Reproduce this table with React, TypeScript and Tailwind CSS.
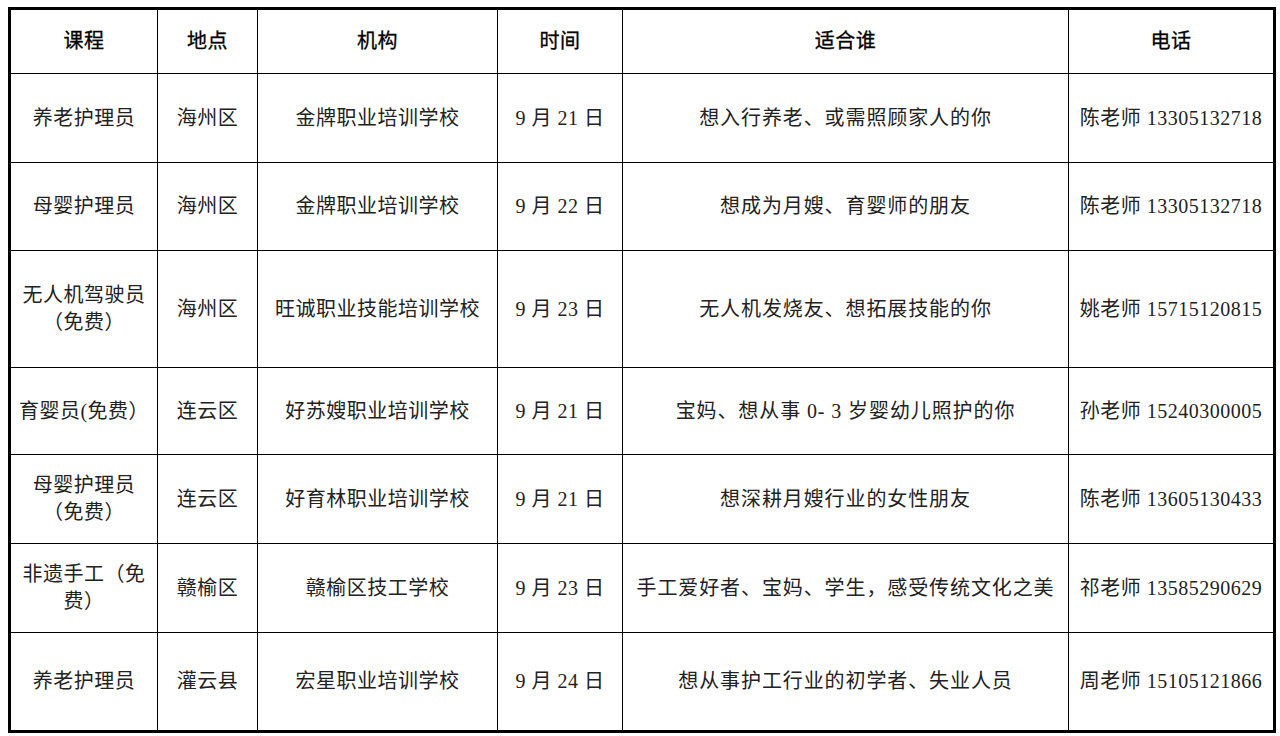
import React from "react";

/** Column widths in px (each includes its 1px right border) */
const COLS = "grid-cols-[147px_100px_240px_125px_446px_1fr]";

const HEADERS = ["课程", "地点", "机构", "时间", "适合谁", "电话"];

interface Row {
  course: React.ReactNode;
  area: string;
  school: string;
  date: string;
  who: string;
  phone: string;
  h: string;
}

const ROWS: Row[] = [
  {
    course: "养老护理员",
    area: "海州区",
    school: "金牌职业培训学校",
    date: "9 月 21 日",
    who: "想入行养老、或需照顾家人的你",
    phone: "陈老师 13305132718",
    h: "h-[89px]",
  },
  {
    course: "母婴护理员",
    area: "海州区",
    school: "金牌职业培训学校",
    date: "9 月 22 日",
    who: "想成为月嫂、育婴师的朋友",
    phone: "陈老师 13305132718",
    h: "h-[88px]",
  },
  {
    course: (
      <>
        无人机驾驶员
        <br />
        （免费）
      </>
    ),
    area: "海州区",
    school: "旺诚职业技能培训学校",
    date: "9 月 23 日",
    who: "无人机发烧友、想拓展技能的你",
    phone: "姚老师 15715120815",
    h: "h-[117px]",
  },
  {
    course: "育婴员(免费）",
    area: "连云区",
    school: "好苏嫂职业培训学校",
    date: "9 月 21 日",
    who: "宝妈、想从事 0- 3 岁婴幼儿照护的你",
    phone: "孙老师 15240300005",
    h: "h-[87px]",
  },
  {
    course: (
      <>
        母婴护理员
        <br />
        （免费）
      </>
    ),
    area: "连云区",
    school: "好育林职业培训学校",
    date: "9 月 21 日",
    who: "想深耕月嫂行业的女性朋友",
    phone: "陈老师 13605130433",
    h: "h-[89px]",
  },
  {
    course: (
      <>
        非遗手工（免
        <br />
        费）
      </>
    ),
    area: "赣榆区",
    school: "赣榆区技工学校",
    date: "9 月 23 日",
    who: "手工爱好者、宝妈、学生，感受传统文化之美",
    phone: "祁老师 13585290629",
    h: "h-[89px]",
  },
  {
    course: "养老护理员",
    area: "灌云县",
    school: "宏星职业培训学校",
    date: "9 月 24 日",
    who: "想从事护工行业的初学者、失业人员",
    phone: "周老师 15105121866",
    h: "h-[97px]",
  },
];

function Cell({
  children,
  last,
  bottom,
  className = "",
}: {
  children: React.ReactNode;
  last?: boolean;
  bottom?: boolean;
  className?: string;
}) {
  return (
    <div
      className={
        "flex items-center justify-center text-center leading-[27px] border-black " +
        (last ? "" : "border-r ") +
        (bottom ? "" : "border-b ") +
        className
      }
    >
      {children}
    </div>
  );
}

export default function App() {
  return (
    <div className="w-[1280px] h-[736px] bg-white pt-[7px] pl-[8px] overflow-hidden">
      <div
        className="w-[1268px] border-[3px] border-black text-[20px] text-[#222] tracking-[0.5px]"
        style={{ fontFamily: '"Liberation Serif", "Noto Sans CJK SC", serif' }}
      >
        {/* Header */}
        <div className={`grid ${COLS} h-[64px]`}>
          {HEADERS.map((h, i) => (
            <Cell key={h} last={i === HEADERS.length - 1} className="text-black [-webkit-text-stroke:0.3px_black]">
              {h}
            </Cell>
          ))}
        </div>

        {/* Body */}
        {ROWS.map((r, ri) => {
          const bottom = ri === ROWS.length - 1;
          return (
            <div key={ri} className={`grid ${COLS} ${r.h}`}>
              <Cell bottom={bottom}>{r.course}</Cell>
              <Cell bottom={bottom}>{r.area}</Cell>
              <Cell bottom={bottom}>{r.school}</Cell>
              <Cell bottom={bottom} className="whitespace-pre">{r.date}</Cell>
              <Cell bottom={bottom} className="whitespace-pre tracking-[0.9px]">{r.who}</Cell>
              <Cell bottom={bottom} last>
                {r.phone}
              </Cell>
            </div>
          );
        })}
      </div>
    </div>
  );
}
